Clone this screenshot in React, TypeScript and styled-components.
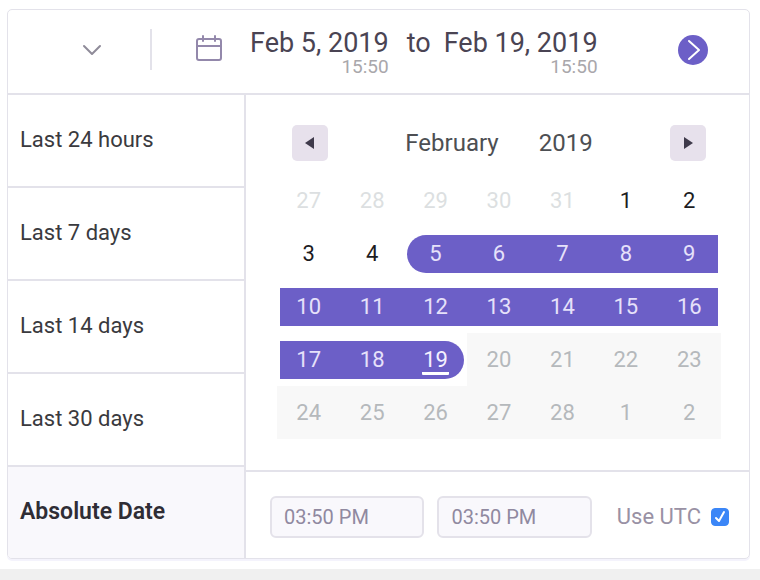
import React from "react";
import styled, { createGlobalStyle, css } from "styled-components";

const line = "#e3e2ea";
const accent = "#6c5fc7";

const GlobalStyle = createGlobalStyle`
  *, *::before, *::after { box-sizing: border-box; }
  body {
    margin: 0;
    background: #f0f0f0;
    color: #3a3841;
    font-family: Roboto, "Liberation Sans", sans-serif;
  }
  button, input { font: inherit; color: inherit; }
  button { padding: 0; border: 0; background: none; cursor: pointer; }
`;

const Page = styled.main`
  padding: 9px 10px 10px 7px;
  background: #fff;
`;

const Card = styled.section`
  border: 1px solid ${line};
  border-radius: 5px;
  box-shadow: 0 2px 0 #f4f3fc;
  overflow: hidden;
`;

const Header = styled.header`
  display: flex;
  align-items: center;
  height: 85px;
  padding: 0 41px 4px 0;
  border-bottom: 2px solid ${line};
`;

const MenuToggle = styled.button`
  display: flex;
  align-items: center;
  justify-content: center;
  flex: 0 0 144px;
  height: 41px;
  padding-left: 26px;
  border-right: 2px solid ${line};
`;

const RangeSummary = styled.div`
  display: flex;
  align-items: flex-start;
  padding-top: 4px;
  margin-left: 43px;
`;

const CalendarIcon = styled.svg`
  margin: 7px 28px 0 0;
`;

const Moment = styled.div`
  display: flex;
  flex-direction: column;
  align-items: flex-end;
  color: #4a4453;
  font-size: 27px;
  line-height: 30px;
  white-space: nowrap;
`;

const Time = styled.time`
  color: #a9a7ab;
  font-size: 19px;
  line-height: 18px;
`;

const Joiner = styled.span`
  margin: 0 13px 0 18px;
  color: #4a4453;
  font-size: 27px;
  line-height: 30px;
`;

const GoButton = styled.button`
  display: flex;
  align-items: center;
  justify-content: center;
  width: 30px;
  height: 30px;
  margin-left: auto;
  border-radius: 50%;
  background: ${accent};
`;

const Body = styled.div`
  display: flex;
`;

const Presets = styled.nav`
  display: flex;
  flex-direction: column;
  flex: 0 0 238px;
  border-right: 2px solid ${line};
`;

const Preset = styled.button<{ $active?: boolean }>`
  flex: 1;
  padding: 0 12px 2px;
  color: ${(p) => (p.$active ? "#2f2d35" : "#3a3a3e")};
  font-size: ${(p) => (p.$active ? 23 : 22)}px;
  font-weight: ${(p) => (p.$active ? 600 : 400)};
  text-align: left;
  background: ${(p) => (p.$active ? "#f9f8fc" : "#fff")};

  & + & { border-top: 2px solid ${line}; }
`;

const Picker = styled.div`
  flex: 1;
  min-width: 0;
`;

const CalendarPanel = styled.div`
  padding: 30px 28px 31px 31px;
`;

const MonthBar = styled.div`
  display: flex;
  align-items: center;
  justify-content: space-between;
  padding: 0 15px;
  margin-bottom: 13px;
`;

const MonthTitle = styled.h2`
  display: flex;
  gap: 40px;
  margin: 0;
  color: #4d4f53;
  font-size: 24px;
  font-weight: 400;
  line-height: 32px;
`;

const StepButton = styled.button`
  display: flex;
  align-items: center;
  justify-content: center;
  width: 36px;
  height: 36px;
  border-radius: 5px;
  background: #e7e1ec;
`;

const Days = styled.table`
  width: 100%;
  table-layout: fixed;
  border-collapse: collapse;
`;

type DayKind = "past" | "open" | "range" | "start" | "end" | "future";

const dayColors: Record<DayKind, string> = {
  past: "#dcdfe1",
  open: "#1d1d1f",
  range: "#e6e1fa",
  start: "#e6e1fa",
  end: "#f4f1ff",
  future: "#b5b9bc",
};

const DayButton = styled.button<{ $kind: DayKind }>`
  display: flex;
  align-items: center;
  justify-content: center;
  width: 100%;
  height: 38px;
  color: ${(p) => dayColors[p.$kind]};
  font-size: 22px;
  ${(p) =>
    ["range", "start", "end"].includes(p.$kind) && css`background: ${accent};`}
  ${(p) => p.$kind === "start" && css`border-radius: 19px 0 0 19px;`}
  ${(p) => p.$kind === "end" && css`border-radius: 0 19px 19px 0;`}
`;

const insetLeft = css`
  padding-left: 3px;
  ${DayButton} { padding-right: 3px; }
`;

const insetRight = css`
  padding-right: 3px;
  ${DayButton} { padding-left: 3px; }
`;

const DayCell = styled.td<{ $kind: DayKind }>`
  height: 53px;
  padding: 0;
  background: ${(p) => (p.$kind === "future" ? "#f8f8f8" : "transparent")};

  &:first-child { ${insetLeft} }
  &:last-child { ${insetRight} }
  ${(p) => p.$kind === "start" && insetLeft}
  ${(p) => p.$kind === "end" && insetRight}
`;

const Today = styled.span`
  padding: 3px 1px 0;
  line-height: 24px;
  border-bottom: 3px solid #fff;
  border-radius: 1px;
`;

const TimeBar = styled.form`
  display: flex;
  align-items: center;
  gap: 13px;
  height: 88px;
  padding: 3px 20px 0 24px;
  border-top: 2px solid ${line};
`;

const TimeInput = styled.input`
  flex: 1;
  min-width: 0;
  height: 42px;
  padding: 0 12px;
  border: 2px solid #e4e2ea;
  border-radius: 6px;
  background: #f9f8fc;
  color: #9089a0;
  font-size: 20px;
`;

const UtcLabel = styled.label`
  display: flex;
  align-items: center;
  gap: 10px;
  margin-left: 12px;
  color: #9991a4;
  font-size: 22px;
  white-space: nowrap;
`;

const CheckHolder = styled.span`
  display: grid;
  width: 18px;
  height: 18px;

  & > * { grid-area: 1 / 1; }
  svg { pointer-events: none; }
`;

const Checkbox = styled.input`
  appearance: none;
  width: 18px;
  height: 18px;
  margin: 0;
  border: 1px solid #aaa;
  border-radius: 4px;

  &:checked { border-color: #3b86f7; background: #3b86f7; }
  & + svg { visibility: hidden; }
  &:checked + svg { visibility: visible; }
`;

const presets = ["Last 24 hours", "Last 7 days", "Last 14 days", "Last 30 days", "Absolute Date"];

const weeks = [
  [27, 28, 29, 30, 31, 1, 2],
  [3, 4, 5, 6, 7, 8, 9],
  [10, 11, 12, 13, 14, 15, 16],
  [17, 18, 19, 20, 21, 22, 23],
  [24, 25, 26, 27, 28, 1, 2],
];

function kindOf(index: number): DayKind {
  if (index < 5) return "past";
  if (index < 9) return "open";
  if (index === 9) return "start";
  if (index < 23) return "range";
  return index === 23 ? "end" : "future";
}

export default function App() {
  const [preset, setPreset] = React.useState("Absolute Date");

  return (
    <>
      <GlobalStyle />
      <Page>
        <Card>
          <Header>
            <MenuToggle aria-label="Open menu">
              <svg width="20" height="12" viewBox="0 0 20 12" fill="none" stroke="#8f8b99" strokeWidth="2" strokeLinecap="round" strokeLinejoin="round">
                <path d="M2 2l8 8 8-8" />
              </svg>
            </MenuToggle>
            <RangeSummary>
              <CalendarIcon width="27" height="27" viewBox="0 0 27 27" fill="none" stroke="#9388ab" strokeWidth="2" strokeLinecap="round">
                <rect x="2" y="4" width="24" height="21" rx="2" />
                <path d="M2 11h24M8 1v5M20 1v5" />
              </CalendarIcon>
              <Moment>
                Feb 5, 2019
                <Time>15:50</Time>
              </Moment>
              <Joiner>to</Joiner>
              <Moment>
                Feb 19, 2019
                <Time>15:50</Time>
              </Moment>
            </RangeSummary>
            <GoButton aria-label="Apply range">
              <svg width="30" height="30" viewBox="0 0 30 30" fill="none" stroke="#fff" strokeWidth="2" strokeLinecap="round" strokeLinejoin="round">
                <path d="M11 6l10 9-10 9" />
              </svg>
            </GoButton>
          </Header>
          <Body>
            <Presets aria-label="Date presets">
              {presets.map((name) => (
                <Preset key={name} $active={name === preset} onClick={() => setPreset(name)}>
                  {name}
                </Preset>
              ))}
            </Presets>
            <Picker>
              <CalendarPanel>
                <MonthBar>
                  <StepButton aria-label="Previous month">
                    <svg width="10" height="12" viewBox="0 0 10 12" fill="#3f3a4b">
                      <path d="M9 0v12L0 6z" />
                    </svg>
                  </StepButton>
                  <MonthTitle>
                    <span>February</span>
                    <span>2019</span>
                  </MonthTitle>
                  <StepButton aria-label="Next month">
                    <svg width="10" height="12" viewBox="0 0 10 12" fill="#3f3a4b">
                      <path d="M1 0v12l9-6z" />
                    </svg>
                  </StepButton>
                </MonthBar>
                <Days>
                  <tbody>
                    {weeks.map((week, row) => (
                      <tr key={row}>
                        {week.map((day, column) => {
                          const kind = kindOf(row * 7 + column);
                          return (
                            <DayCell key={column} $kind={kind}>
                              <DayButton $kind={kind} disabled={kind === "future"}>
                                {kind === "end" ? <Today>{day}</Today> : day}
                              </DayButton>
                            </DayCell>
                          );
                        })}
                      </tr>
                    ))}
                  </tbody>
                </Days>
              </CalendarPanel>
              <TimeBar>
                <TimeInput aria-label="Start time" defaultValue="03:50 PM" />
                <TimeInput aria-label="End time" defaultValue="03:50 PM" />
                <UtcLabel>
                  Use UTC
                  <CheckHolder>
                    <Checkbox type="checkbox" defaultChecked />
                    <svg width="18" height="18" viewBox="0 0 18 18" fill="none" stroke="#fff" strokeWidth="2" strokeLinecap="round" strokeLinejoin="round">
                      <path d="M5 10l3 3 5-9" />
                    </svg>
                  </CheckHolder>
                </UtcLabel>
              </TimeBar>
            </Picker>
          </Body>
        </Card>
      </Page>
    </>
  );
}
